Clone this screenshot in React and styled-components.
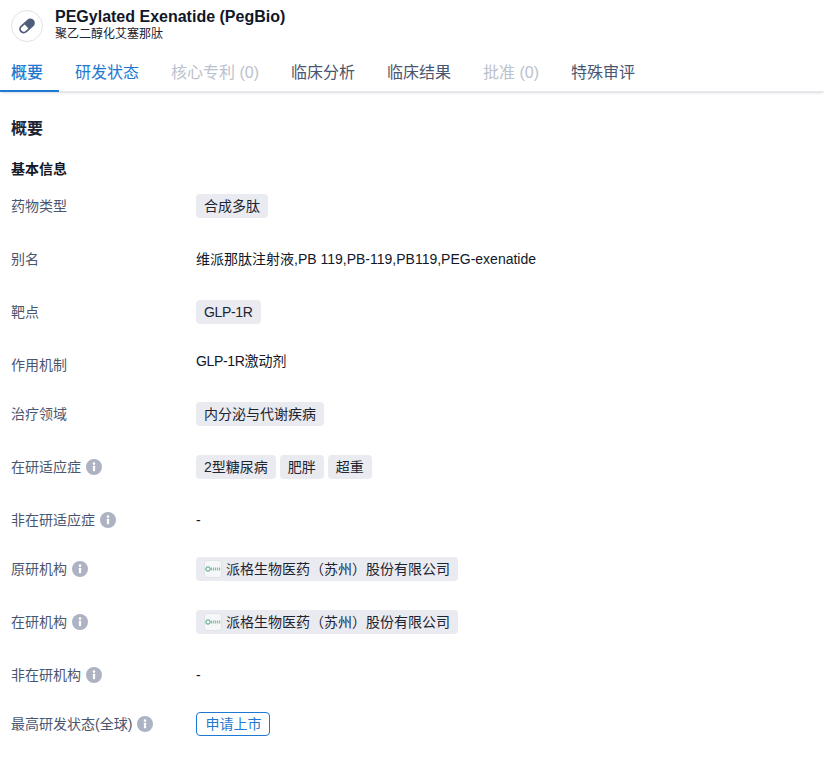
import React from "react";
import styled, { createGlobalStyle } from "styled-components";

const Global = createGlobalStyle`
  html, body { margin: 0; padding: 0; background: #fff; }
  body { font-family: "Liberation Sans", "Noto Sans CJK SC", sans-serif; color: #020817; }
`;

const Page = styled.div`width: 824px; height: 758px; overflow: hidden; background: #fff;`;
const Header = styled.header`display: flex; align-items: center; gap: 12px; padding: 8px 11px 0; height: 34px;`;
const IconCircle = styled.div`
  width: 32px; height: 32px; box-sizing: border-box; border: 1px solid #e1e3e9; border-radius: 50%;
  display: flex; align-items: center; justify-content: center; flex: none; margin-top: 1px;
`;
const Titles = styled.div`display: flex; flex-direction: column; margin-top: -2px;`;
const Title = styled.div`font-size: 16px; line-height: 20px; font-weight: 700; color: #0f1729;`;
const Subtitle = styled.div`font-size: 12px; line-height: 14px; color: #1d2433;`;

const Tabs = styled.nav`
  display: flex; height: 50px; box-shadow: 0 2px 2px -1px rgba(30, 40, 70, 0.16);
  border-bottom: 1px solid #e6e8ec; box-sizing: border-box;
`;
const Tab = styled.div`
  height: 50px; box-sizing: border-box; padding: 21px 16px 0; font-size: 16px; line-height: 20px; white-space: nowrap;
  color: ${p => (p.$state === "disabled" ? "#bcc1cd" : p.$state === "blue" || p.$state === "active" ? "#1f78d1" : "#4a5670")};
  ${p => p.$first && "padding-left: 11px; padding-right: 16px; width: 59px;"}
  ${p => p.$state === "active" && "border-bottom: 2px solid #1f78d1; font-weight: 500;"}
`;

const Content = styled.main`padding: 26px 11px 0;`;
const H1 = styled.h1`margin: 0; font-size: 16px; line-height: 22px; font-weight: 700; color: #1d2433;`;
const H2 = styled.h2`margin: 19px 0 0; font-size: 14px; line-height: 20px; font-weight: 700; color: #0f1729;`;
const List = styled.div`margin-top: 15px;`;
const Row = styled.div`
  display: grid; grid-template-columns: 185px 1fr; min-height: 24px;
  margin-bottom: ${p => (p.$short ? 25 : 29)}px;
`;
const Label = styled.div`
  display: flex; align-items: center; gap: 5px; font-size: 14px; line-height: 24px; height: 24px; color: #4a5670;
`;
const Info = styled.span`display: inline-flex; flex: none; width: 16px; height: 16px;`;
const Value = styled.div`
  display: flex; align-items: ${p => (p.$top ? "flex-start" : "center")}; gap: 4px; font-size: 14px; line-height: ${p => (p.$top ? "16px" : "24px")}; color: #0f1729;
`;
const Tight = styled.span`letter-spacing: -0.33px;`;
const Tag = styled.span`
  display: inline-flex; align-items: center; gap: 4px; height: 24px; padding: 0 8px; border-radius: 4px;
  background: #e9ebf0; color: #1d2433; font-size: 14px; line-height: 24px; white-space: nowrap;
`;
const LogoBox = styled.span`
  width: 18px; height: 18px; box-sizing: border-box; border: 1px solid #e1e3e9; border-radius: 3px; background: #f6f7f8;
  display: inline-flex; align-items: center; justify-content: center; flex: none;
`;
const Status = styled.span`
  display: inline-flex; align-items: center; justify-content: center; height: 24px; box-sizing: border-box; width: 74px;
  padding-left: 1px; border: 1px solid #1f78d1; border-radius: 4px; color: #1f78d1; font-size: 14px; background: #fff;
`;

const InfoIcon = () => (
  <Info>
    <svg width="16" height="16" viewBox="0 0 16 16">
      <circle cx="8" cy="8" r="8" fill="#adb3c3" />
      <circle cx="8" cy="4.6" r="1.3" fill="#fff" />
      <rect x="6.9" y="6.8" width="2.2" height="5.4" rx="0.4" fill="#fff" />
    </svg>
  </Info>
);

const Pill = () => (
  <svg width="20" height="20" viewBox="0 0 20 20">
    <g transform="rotate(-42 10 10)">
      <rect x="1" y="5.5" width="18" height="9" rx="4.5" fill="#4f5d7c" />
      <path d="M9.4 7.3H5.5a2.7 2.7 0 0 0 0 5.4H9.4z" fill="#fff" />
    </g>
  </svg>
);

const Logo = () => (
  <LogoBox>
    <svg width="16" height="8" viewBox="0 0 16 8">
      <circle cx="3" cy="4" r="2.2" fill="none" stroke="#3ea37a" strokeWidth="1" />
      <path d="M6 4h9.4" stroke="#7fc79a" strokeWidth="3" strokeDasharray="1.2 .8" />
    </svg>
  </LogoBox>
);

const Org = () => <Tag><Logo />派格生物医药（苏州）股份有限公司</Tag>;

export default function App() {
  return (
    <Page>
      <Global />
      <Header>
        <IconCircle><Pill /></IconCircle>
        <Titles>
          <Title>PEGylated Exenatide (PegBio)</Title>
          <Subtitle>聚乙二醇化艾塞那肽</Subtitle>
        </Titles>
      </Header>
      <Tabs>
        <Tab $first $state="active">概要</Tab>
        <Tab $state="blue">研发状态</Tab>
        <Tab $state="disabled">核心专利 (0)</Tab>
        <Tab>临床分析</Tab>
        <Tab>临床结果</Tab>
        <Tab $state="disabled">批准 (0)</Tab>
        <Tab>特殊审评</Tab>
      </Tabs>
      <Content>
        <H1>概要</H1>
        <H2>基本信息</H2>
        <List>
          <Row><Label>药物类型</Label><Value><Tag>合成多肽</Tag></Value></Row>
          <Row><Label>别名</Label><Value>维派那肽注射液,PB 119,PB-119,PB119,PEG-exenatide</Value></Row>
          <Row><Label>靶点</Label><Value><Tag><Tight>GLP-1R</Tight></Tag></Value></Row>
          <Row $short><Label>作用机制</Label><Value $top><span><Tight>GLP-1R</Tight>激动剂</span></Value></Row>
          <Row><Label>治疗领域</Label><Value><Tag>内分泌与代谢疾病</Tag></Value></Row>
          <Row><Label>在研适应症<InfoIcon /></Label><Value><Tag>2型糖尿病</Tag><Tag>肥胖</Tag><Tag>超重</Tag></Value></Row>
          <Row $short><Label>非在研适应症<InfoIcon /></Label><Value>-</Value></Row>
          <Row><Label>原研机构<InfoIcon /></Label><Value><Org /></Value></Row>
          <Row><Label>在研机构<InfoIcon /></Label><Value><Org /></Value></Row>
          <Row $short><Label>非在研机构<InfoIcon /></Label><Value>-</Value></Row>
          <Row><Label>最高研发状态(全球)<InfoIcon /></Label><Value><Status>申请上市</Status></Value></Row>
        </List>
      </Content>
    </Page>
  );
}
